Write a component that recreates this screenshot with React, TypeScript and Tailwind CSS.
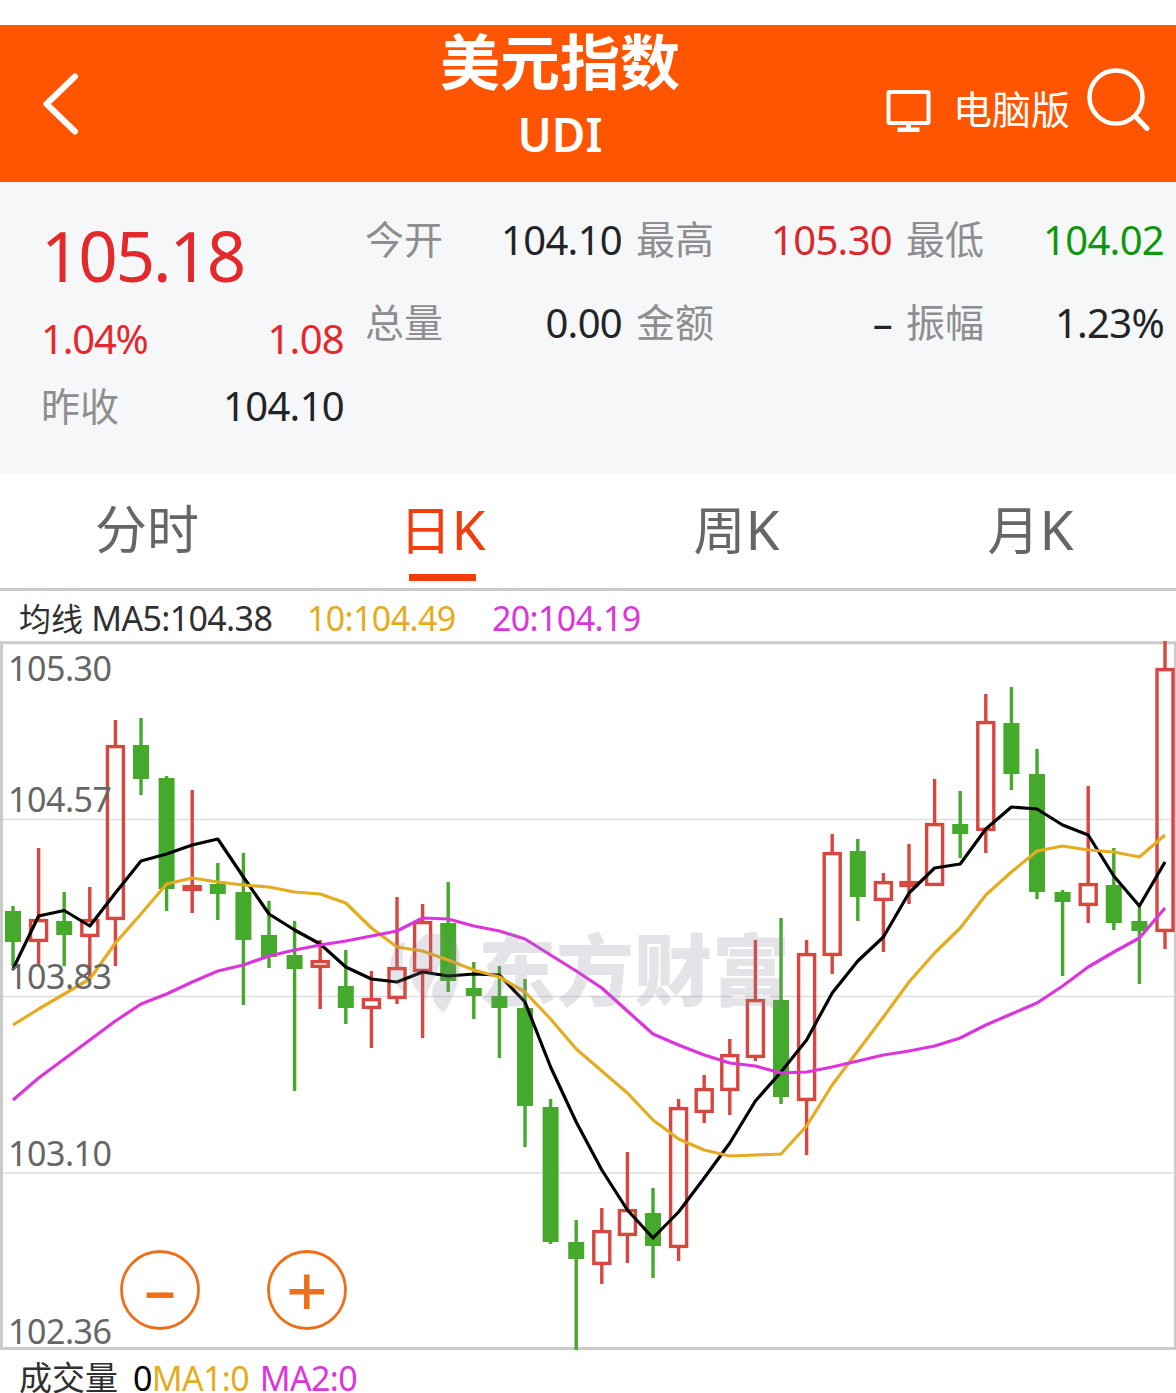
import { clsx } from 'clsx';

type Candle = [kind: 'up' | 'down', high: number, top: number, bottom: number, low: number];

const STEP = 25.6;
const FIRST_X = 13;

const CANDLES: Candle[] = [
  ['down', 906, 911, 942, 966],
  ['up', 848, 919, 942, 966],
  ['down', 892, 921, 935, 966],
  ['up', 887, 919, 937, 977],
  ['up', 720, 745, 920, 966],
  ['down', 718, 745, 779, 795],
  ['down', 776, 778, 889, 911],
  ['up', 790, 885, 891, 913],
  ['down', 863, 884, 894, 920],
  ['down', 853, 892, 940, 1005],
  ['down', 901, 935, 957, 968],
  ['down', 921, 955, 969, 1091],
  ['up', 940, 960, 968, 1009],
  ['down', 950, 986, 1008, 1024],
  ['up', 971, 998, 1009, 1048],
  ['up', 897, 967, 999, 1004],
  ['up', 904, 921, 972, 1038],
  ['down', 882, 923, 981, 992],
  ['down', 962, 988, 996, 1019],
  ['down', 966, 996, 1008, 1058],
  ['down', 979, 1008, 1106, 1147],
  ['down', 1099, 1107, 1242, 1244],
  ['down', 1220, 1242, 1259, 1350],
  ['up', 1208, 1230, 1265, 1284],
  ['up', 1152, 1209, 1236, 1263],
  ['down', 1188, 1213, 1246, 1278],
  ['up', 1099, 1107, 1248, 1261],
  ['up', 1075, 1088, 1113, 1123],
  ['up', 1039, 1054, 1091, 1115],
  ['up', 940, 999, 1058, 1061],
  ['down', 918, 1000, 1097, 1104],
  ['up', 940, 953, 1101, 1155],
  ['up', 834, 852, 956, 974],
  ['down', 839, 851, 897, 921],
  ['up', 873, 881, 901, 952],
  ['up', 844, 881, 887, 904],
  ['up', 779, 823, 886, 886],
  ['down', 791, 824, 834, 858],
  ['up', 694, 721, 831, 853],
  ['down', 687, 723, 774, 790],
  ['down', 749, 774, 892, 899],
  ['down', 890, 892, 902, 976],
  ['up', 786, 883, 906, 923],
  ['down', 848, 885, 923, 930],
  ['down', 907, 921, 931, 984],
  ['up', 641, 668, 932, 949],
];

const MA5 = [
  969, 916, 910.5, 926, 893, 861, 854, 845, 839, 877, 914, 930, 944, 967, 979, 982, 972, 976, 974, 975, 1002, 1067, 1122,
  1170, 1210, 1238, 1212, 1178, 1143, 1101, 1072, 1040, 993, 961, 937, 893, 868, 864, 829, 807, 809, 825, 835, 876, 906, 862,
];
const MA10 = [
  1025, 1009, 994, 979, 943, 914, 884, 878, 882, 885, 887, 892, 894, 903, 928, 947, 951, 960, 970, 977, 992, 1019, 1049,
  1071, 1093, 1120, 1139, 1150, 1156, 1155, 1154, 1126, 1085, 1051, 1017, 982, 953, 928, 895, 872, 851, 846, 850, 852, 857, 835,
];
const MA20 = [
  1100, 1078, 1059, 1040, 1021, 1004, 994, 982, 971, 965, 956, 950, 945, 941, 936, 931, 918, 919, 926, 931, 939, 955, 971,
  988, 1011, 1034, 1045, 1055, 1063, 1066, 1073, 1072, 1067, 1061, 1055, 1051, 1046, 1038, 1025, 1014, 1003, 986, 967, 952, 938, 908,
];

const AXIS = [
  { label: '105.30', y: 681 },
  { label: '104.57', y: 812 },
  { label: '103.83', y: 989 },
  { label: '103.10', y: 1166 },
  { label: '102.36', y: 1344 },
];

const QUOTES = [
  { label: '今开', value: '104.10', color: 'text-[#222427]' },
  { label: '最高', value: '105.30', color: 'text-[#d9292d]' },
  { label: '最低', value: '104.02', color: 'text-[#0b980b]' },
  { label: '总量', value: '0.00', color: 'text-[#222427]' },
  { label: '金额', value: '–', color: 'text-[#222427]' },
  { label: '振幅', value: '1.23%', color: 'text-[#222427]' },
];

const TABS = [
  { name: '分时', suffix: '' },
  { name: '日', suffix: 'K' },
  { name: '周', suffix: 'K' },
  { name: '月', suffix: 'K' },
];

const toPoints = (values: number[]) => values.map((y, i) => `${FIRST_X + i * STEP},${y}`).join(' ');

function Header() {
  return (
    <header className="mt-[25px] h-[157px] bg-[#ff5500] text-white grid grid-cols-[340px_440px_1fr]">
      <button className="pl-10 flex items-center">
        <svg width="42" height="64" viewBox="0 0 42 64" fill="none" stroke="currentColor" strokeWidth="6">
          <path d="M35 4.500 6.500 32 35 59.500" strokeLinejoin="round" strokeLinecap="round" />
        </svg>
      </button>
      <div className="flex flex-col items-center font-bold">
        <h1 className="mt-[3px] h-[73px] text-[60px] leading-[68px]">美元指数</h1>
        <p className="text-[46px] leading-[66px] font-semibold">UDI</p>
      </div>
      <div className="flex items-start">
        <svg className="ml-[105px] mt-[64px]" width="48" height="46" viewBox="0 0 48 46" fill="none" stroke="currentColor" strokeWidth="4">
          <rect x="3.5" y="3" width="40" height="31" rx="1" />
          <path d="M23.500 34v7" strokeWidth="5" />
          <path d="M12.500 40.800h22" strokeWidth="4.500" />
        </svg>
        <span className="ml-[20px] mt-[56px] text-[39px] leading-[56px]">电脑版</span>
        <svg className="ml-[16px] mt-[42px]" width="66" height="66" viewBox="0 0 66 66" fill="none" stroke="currentColor" strokeWidth="4.500">
          <circle cx="30" cy="30" r="26.500" />
          <path d="M50 50 61 61.500" strokeWidth="5" strokeLinecap="round" />
        </svg>
      </div>
    </header>
  );
}

function Summary() {
  return (
    <section className="h-[292px] bg-[#f6f7f9] flex text-[40px] tracking-[-0.7px]">
      <div className="w-[365px] pl-[41px] pr-[21px] pt-7 text-[#e3292b]">
        <div className="text-[69px] leading-[90px] tracking-[-2.1px]">105.18</div>
        <div className="mt-[5px] h-[68px] flex items-center justify-between">
          <span className="tracking-[-1.2px]">1.04%</span>
          <span>1.08</span>
        </div>
        <div className="h-[66px] flex items-center justify-between">
          <span className="text-[39px] tracking-normal text-[#8e8e90]">昨收</span>
          <span className="text-[#222427]">104.10</span>
        </div>
      </div>
      <div className="flex-1 pr-3 pt-4 grid grid-cols-[257px_256px_258px] gap-x-[14px] auto-rows-[83px]">
        {QUOTES.map(q => (
          <div key={q.label} className="flex items-center justify-between">
            <span className="text-[39px] tracking-normal text-[#8e8e90]">{q.label}</span>
            <span className={q.color}>{q.value}</span>
          </div>
        ))}
      </div>
    </section>
  );
}

function Tabs() {
  return (
    <nav className="h-[117px] border-b-[3px] border-[#cbcbcb] grid grid-cols-4 text-[52px]">
      {TABS.map(({ name, suffix }) => {
        const active = name === '日';
        return (
          <button key={name} className={clsx('flex flex-col items-center', active ? 'text-[#f33d0d]' : 'text-[#666]', suffix && 'pl-[3px]')}>
            <span className="h-[100px] leading-[110px]">{name}{suffix && <span className="text-[55px]">{suffix}</span>}</span>
            {active && <span className="w-[67px] h-[7px] bg-[#f33d0d]" />}
          </button>
        );
      })}
    </nav>
  );
}

function Watermark() {
  return (
    <g fill="#8a8a9c" opacity="0.22">
      <path d="M397 944C386 963 388 982 406 994C402 974 401 958 405 942Z" />
      <path d="M426 934C404 950 403 981 426 1000C430 979 446 965 446 934Z" />
      <path d="M451 931C466 954 462 985 444 1013C433 1005 430 995 434 984C448 970 455 953 451 931Z" />
      <text x="478" y="1000" fontSize="78" fontWeight="900">东方财富</text>
    </g>
  );
}

function KLineChart() {
  return (
    <svg className="block" width="1176" height="710" viewBox="0 641 1176 710">
      <g stroke="#dedede" strokeWidth="1.500">
        <path d="M3 819.500H1176M3 996.500H1176M3 1173H1176" />
      </g>
      <path d="M0 642.750H1176M0 1348.500H1176" stroke="#cbcbcb" strokeWidth="3" />
      <path d="M1.500 641V1350M1175.500 641V1350" stroke="#cbcbcb" strokeWidth="3" />
      {CANDLES.map(([kind, high, top, bottom, low], i) => {
        const x = FIRST_X + i * STEP;
        return kind === 'up' ? (
          <g key={i} stroke="#d8473f" strokeWidth="3.400" fill="none">
            <path d={`M${x} ${high}V${top}M${x} ${bottom}V${low}`} />
            <rect x={x - 8} y={top + 1.6} width="16" height={bottom - top - 3.2} />
          </g>
        ) : (
          <g key={i} fill="#45aa2c">
            <rect x={x - 1.7} y={high} width="3.400" height={low - high} />
            <rect x={x - 8} y={top} width="16" height={bottom - top} />
          </g>
        );
      })}
      <g fill="none" strokeWidth="3.200" strokeLinejoin="round">
        <polyline points={toPoints(MA5)} stroke="#000" />
        <polyline points={toPoints(MA10)} stroke="#e5ac20" />
        <polyline points={toPoints(MA20)} stroke="#dd35dc" />
      </g>
      <Watermark />
      <g fill="#666" fontSize="34">
        {AXIS.map(a => (
          <text key={a.label} x="8" y={a.y} textLength="104">{a.label}</text>
        ))}
      </g>
      {/* zoom controls */}
      <g fill="none" stroke="#ee6f18">
        <circle cx="160" cy="1290" r="38.500" strokeWidth="2.800" />
        <path d="M146.500 1295.200H173.500" strokeWidth="5.500" />
        <circle cx="307" cy="1290" r="38.500" strokeWidth="2.800" />
        <path d="M289.500 1291.700H324M306.800 1274.500V1309" strokeWidth="5.500" />
      </g>
    </svg>
  );
}

export default function App() {
  return (
    <div className="w-[1176px] h-[1393px] overflow-hidden bg-white flow-root font-['Noto_Sans','Noto_Sans_CJK_SC',sans-serif]">
      <Header />
      <Summary />
      <Tabs />
      <div className="h-[50px] pt-1 pl-[19px] flex items-center text-[34px] leading-[46px] tracking-[-0.65px] whitespace-pre">
        <span className="w-[288px] text-[#303030]"><span className="text-[32px] tracking-normal">均线</span> MA5:104.38</span>
        <span className="w-[185px] text-[#e5ac20]">10:104.49</span>
        <span className="text-[#dd35dc]">20:104.19</span>
      </div>
      <KLineChart />
      <div className="h-[42px] pt-3 pl-[19px] flex items-center text-[34px] leading-[30px] tracking-[-0.65px] whitespace-pre">
        <span className="w-[114px] text-[33px] tracking-normal text-[#303030]">成交量</span>
        <span className="text-black">0</span>
        <span className="w-[108px] text-[#e5ac20]">MA1:0</span>
        <span className="text-[#dd35dc]">MA2:0</span>
      </div>
    </div>
  );
}
